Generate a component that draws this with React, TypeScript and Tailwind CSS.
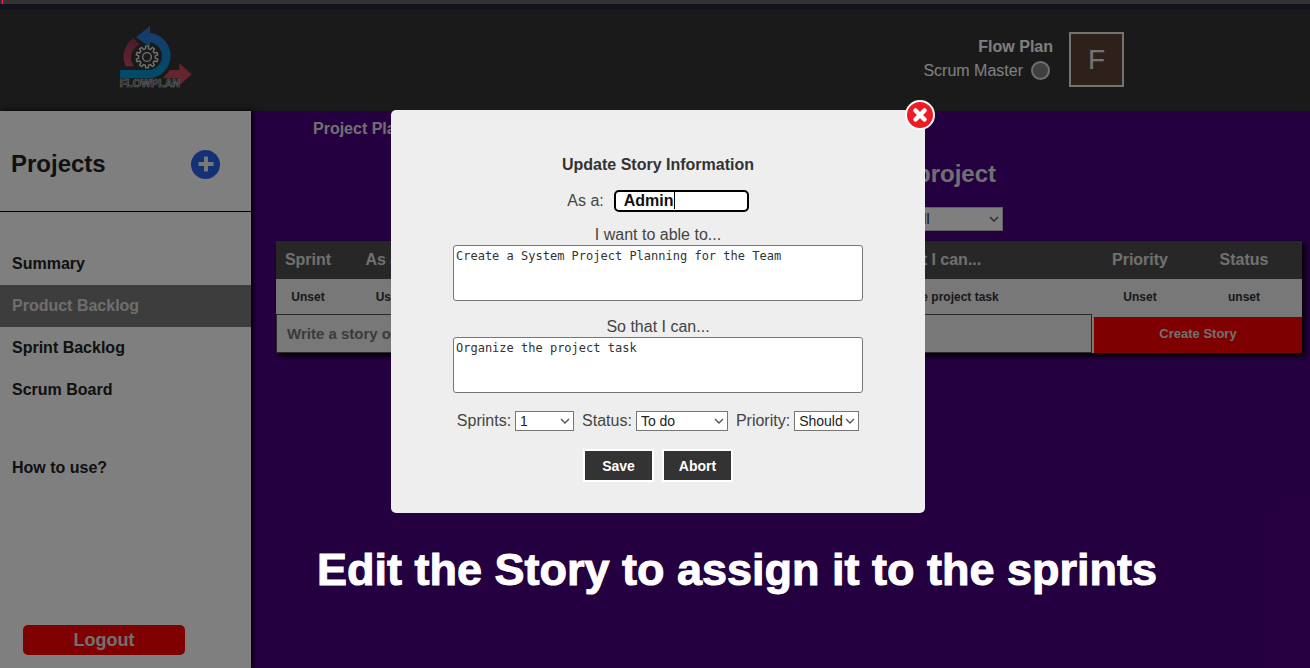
import React from "react";

const NAV = ["Summary", "Product Backlog", "Sprint Backlog", "Scrum Board"];

function gearPath(cx: number, cy: number, teeth: number, outer: number, inner: number) {
  const points: string[] = [];
  const step = (Math.PI * 2) / teeth;
  for (let i = 0; i < teeth; i++) {
    const a = i * step - Math.PI / 2;
    const corners: [number, number][] = [
      [-0.3, inner],
      [-0.2, outer],
      [0.2, outer],
      [0.3, inner],
    ];
    for (const [offset, r] of corners) {
      const t = a + offset * step;
      points.push(`${(cx + Math.cos(t) * r).toFixed(1)} ${(cy + Math.sin(t) * r).toFixed(1)}`);
    }
  }
  return `M${points.join("L")}Z`;
}

function Logo() {
  return (
    <svg viewBox="0 0 330 255" className="h-[85px] w-[110px]" role="img" aria-label="Flowplan">
      <defs>
        <linearGradient id="loop" x1="0" y1="0" x2="0" y2="1">
          <stop offset="0" stopColor="#3474d8" />
          <stop offset="1" stopColor="#0098d0" />
        </linearGradient>
        <linearGradient id="tail" x1="0" y1="0" x2="0" y2="1">
          <stop offset="0" stopColor="#983658" />
          <stop offset="1" stopColor="#c84862" />
        </linearGradient>
      </defs>
      <path d="M100 69A69 69 0 0 0 77 154L102 154A42 42 0 0 1 118 89Z" fill="url(#tail)" />
      <path
        d="M108 67L150 33V54A69 69 0 0 1 212 122A68 68 0 0 1 144 190H60V165H144A42 42 0 0 0 186 122A42 42 0 0 0 150 82V96Z"
        fill="url(#loop)"
      />
      <path d="M188 190L210 165H238V145L275 178L238 211V190Z" fill="#c84a58" />
      <path
        d={gearPath(141, 126, 10, 33, 25)}
        fill="none"
        stroke="#e8e8e8"
        strokeWidth="4"
        strokeLinejoin="round"
      />
      <circle cx="141" cy="126" r="13" fill="none" stroke="#e8e8e8" strokeWidth="4" />
      <text
        x="59"
        y="216"
        fontSize="32"
        className="font-[Liberation_Sans,sans-serif] font-bold"
        fill="#333333"
        stroke="#c8c8c8"
        strokeWidth="2"
      >
        FLOWPLAN
      </text>
    </svg>
  );
}

function Chevron() {
  return (
    <svg
      viewBox="0 0 10 6"
      className="pointer-events-none absolute right-1 top-1/2 h-1.5 w-2.5 -translate-y-1/2"
      fill="none"
      stroke="#555555"
      strokeWidth="1.4"
    >
      <path d="M1 1L5 5L9 1" />
    </svg>
  );
}

function Picker({ id, label, value, width }: { id: string; label: string; value: string; width: string }) {
  return (
    <div className="flex items-center gap-1">
      <label htmlFor={id}>{label}</label>
      <span className={`relative ${width}`}>
        <select
          id={id}
          defaultValue={value}
          className="block h-5 w-full appearance-none border border-[#767676] bg-white pl-1 text-sm leading-4 text-[#222222]"
        >
          <option>{value}</option>
        </select>
        <Chevron />
      </span>
    </div>
  );
}

function Header() {
  return (
    <header className="flex h-[101px] items-start justify-between bg-[#343434] pl-[100px] pr-[186px] pt-[5px]">
      <Logo />
      <div className="flex items-center gap-4 pt-[17px] text-white">
        <div className="flex flex-col items-end pb-0.5 text-base leading-6">
          <strong>Flow Plan</strong>
          <span className="flex items-center gap-2 pr-[3px]">
            Scrum Master
            <span className="size-[19px] rounded-full border-2 border-[#dddddd] bg-[#808080]" />
          </span>
        </div>
        <div className="flex size-[55px] items-center justify-center border-2 border-[#e6e6e6] bg-[#5d4037] text-[28px] text-[#e6e6e6]">
          F
        </div>
      </div>
    </header>
  );
}

function Sidebar() {
  return (
    <aside className="z-10 flex w-[251px] shrink-0 flex-col bg-white text-base font-bold text-[#222222] shadow-[2px_0_5px_#000000]">
      <div className="flex h-[101px] items-center justify-between border-b border-black pl-[11px] pr-[31px] pt-1.5">
        <h2 className="text-2xl">Projects</h2>
        <button aria-label="Add project" className="flex size-[29px] items-center justify-center rounded-full bg-[#2a62ec]">
          <svg viewBox="0 0 16 16" className="size-4" stroke="#f0f0f0" strokeWidth="4">
            <path d="M8 0.500V15.500M0.500 8H15.500" />
          </svg>
        </button>
      </div>
      <nav className="flex flex-col pt-[31px]">
        {NAV.map((item) => (
          <a
            key={item}
            href="#"
            className={`flex h-[42px] items-center pl-3 ${
              item === "Product Backlog" ? "bg-[#7a7a7a] text-[#dddddd]" : ""
            }`}
          >
            {item}
          </a>
        ))}
        <a href="#" className="mt-9 flex h-[42px] items-center pl-3">
          How to use?
        </a>
      </nav>
      <button className="mb-[13px] ml-[23px] mt-auto h-[30px] w-[162px] rounded-[5px] bg-[#ff0000] text-lg text-[#e0e0e0]">
        Logout
      </button>
    </aside>
  );
}

function Backlog() {
  return (
    <main className="flex-1 bg-[#4b0082] pl-[25px] pr-2 text-[#e0e0e0]">
      <p className="pl-[37px] pt-1.5 text-base font-bold leading-6">Project Planning</p>
      <h1 className="mt-4 pr-[306px] text-right text-2xl font-bold leading-[34px]">Backlog of the project</h1>
      <div className="mt-4 flex justify-end pr-[299px]">
        <span className="relative w-[98px]">
          <select
            aria-label="Filter stories"
            defaultValue="All"
            className="block h-6 w-full appearance-none border border-[#c0c0c0] bg-white pl-2 text-sm text-[#222222]"
          >
            <option>All</option>
          </select>
          <Chevron />
        </span>
      </div>
      <table className="mt-2.5 w-full table-fixed border-collapse bg-[#f0f0f0] text-center font-bold shadow-[3px_3px_6px_#000000]">
        <colgroup>
          <col className="w-16" />
          <col className="w-[98px]" />
          <col />
          <col className="w-[334px]" />
          <col className="w-[92px]" />
          <col className="w-[116px]" />
        </colgroup>
        <thead>
          <tr className="h-[38px] bg-[#4e4e4e] text-base">
            <th>Sprint</th>
            <th>As a...</th>
            <th>I want to able to...</th>
            <th>So that I can...</th>
            <th>Priority</th>
            <th>Status</th>
          </tr>
        </thead>
        <tbody>
          <tr className="h-[35px] text-xs text-[#333333]">
            <td>Unset</td>
            <td>User</td>
            <td>Create a System</td>
            <td>Organize the project task</td>
            <td>Unset</td>
            <td>unset</td>
          </tr>
          <tr className="text-sm">
            <td colSpan={4} className="p-0 pr-0.5">
              <input
                aria-label="New story"
                placeholder="Write a story or a task"
                className="block h-[39px] w-full border border-[#555555] bg-transparent pl-2.5 text-[15px] font-bold placeholder:text-[#777777]"
              />
            </td>
            <td colSpan={2} className="h-[39px] p-0 pt-0.5">
              <button className="block h-9 w-full bg-[#ff0000] text-[13px] font-bold">Create Story</button>
            </td>
          </tr>
        </tbody>
      </table>
    </main>
  );
}

function StoryDialog() {
  return (
    <form
      role="dialog"
      aria-label="Update Story Information"
      onSubmit={(event) => event.preventDefault()}
      className="relative flex w-[534px] flex-col items-center rounded-[5px] bg-[#eeeeee] px-[62px] pb-[31px] pt-[43px] text-base leading-5 text-[#444444]"
    >
      <button
        type="button"
        aria-label="Close"
        className="absolute -right-2.5 -top-2.5 flex size-[30px] items-center justify-center rounded-full border-2 border-white bg-[#ed1c24]"
      >
        <svg viewBox="0 0 16 16" className="size-4" stroke="#ffffff" strokeWidth="4.500" strokeLinecap="round">
          <path d="M3.500 3.500L12.500 12.500M12.500 3.500L3.500 12.500" />
        </svg>
      </button>
      <h2 className="h-6 font-bold leading-6 text-[#333333]">Update Story Information</h2>
      <div className="mt-[13px] flex h-[22px] items-center gap-2.5">
        <label htmlFor="role">As a:</label>
        <span className="relative">
          <input
            id="role"
            defaultValue="Admin"
            className="block h-[22px] w-[135px] rounded-[5px] border-2 border-black bg-white pl-2 font-bold text-[#111111]"
          />
          <span className="absolute left-[60px] top-0.5 h-[17px] w-px bg-black" />
        </span>
      </div>
      <label htmlFor="want" className="mt-[13px]">
        I want to able to...
      </label>
      <textarea
        id="want"
        defaultValue="Create a System Project Planning for the Team"
        className="block h-14 w-full resize-none rounded-[3px] border border-[#767676] bg-white px-0.5 py-0.5 font-['DejaVu_Sans_Mono',monospace] text-xs leading-4 text-[#333333]"
      />
      <label htmlFor="goal" className="mt-4">
        So that I can...
      </label>
      <textarea
        id="goal"
        defaultValue="Organize the project task"
        className="block h-14 w-full resize-none rounded-[3px] border border-[#767676] bg-white px-0.5 py-0.5 font-['DejaVu_Sans_Mono',monospace] text-xs leading-4 text-[#333333]"
      />
      <div className="mt-[18px] flex gap-2">
        <Picker id="sprints" label="Sprints:" value="1" width="w-[59px]" />
        <Picker id="status" label="Status:" value="To do" width="w-[92px]" />
        <Picker id="priority" label="Priority:" value="Should" width="w-[65px]" />
      </div>
      <div className="mt-[18px] flex gap-2">
        <button type="submit" className="h-[33px] w-[71px] border-2 border-white bg-[#333333] text-sm font-bold text-white">
          Save
        </button>
        <button type="button" className="h-[33px] w-[71px] border-2 border-white bg-[#333333] text-sm font-bold text-white">
          Abort
        </button>
      </div>
    </form>
  );
}

export default function App() {
  return (
    <div className="relative flex min-h-screen flex-col font-['Liberation_Sans',Arial,sans-serif]">
      <div className="h-1 bg-[#333333] pl-0.5">
        <div className="h-full w-px bg-[#ff2850]" />
      </div>
      <div className="h-1.5 bg-[#28243c]" />
      <Header />
      <div className="flex flex-1">
        <Sidebar />
        <Backlog />
      </div>
      <div className="absolute inset-x-0 bottom-0 top-1 z-20 flex flex-col items-center bg-black/50 pl-1.5 pt-[106px]">
        <StoryDialog />
        <p className="mt-7 pl-[158px] text-[45px] font-bold leading-[58px] text-white [-webkit-text-stroke:1px_#ffffff]">
          Edit the Story to assign it to the sprints
        </p>
      </div>
    </div>
  );
}
